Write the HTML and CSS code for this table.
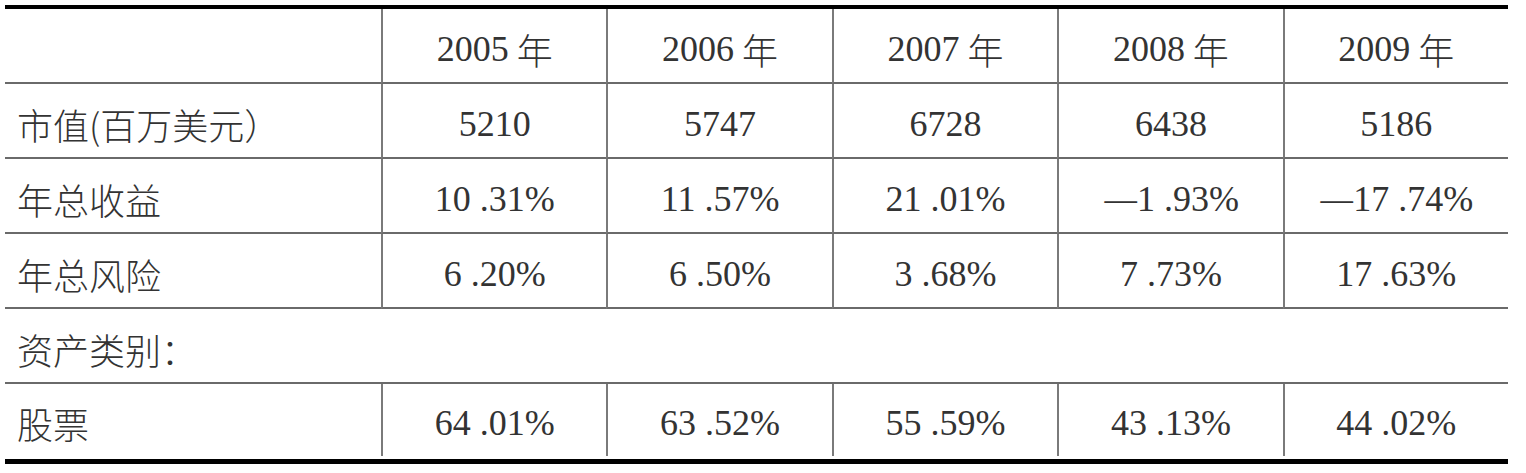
FILE: index.html
```html
<!DOCTYPE html>
<html lang="zh">
<head>
<meta charset="utf-8">
<link rel="stylesheet" href="styles.css">
</head>
<body>
<div class="table">
  <div class="cell label"></div>
  <div class="cell num">2005<span class="cjk"> 年</span></div>
  <div class="cell num">2006<span class="cjk"> 年</span></div>
  <div class="cell num">2007<span class="cjk"> 年</span></div>
  <div class="cell num">2008<span class="cjk"> 年</span></div>
  <div class="cell num">2009<span class="cjk"> 年</span></div>

  <div class="cell label">市值(百万美元）</div>
  <div class="cell num">5210</div>
  <div class="cell num">5747</div>
  <div class="cell num">6728</div>
  <div class="cell num">6438</div>
  <div class="cell num">5186</div>

  <div class="cell label">年总收益</div>
  <div class="cell num">10 .31%</div>
  <div class="cell num">11 .57%</div>
  <div class="cell num">21 .01%</div>
  <div class="cell num"><span class="minus">—</span>1 .93%</div>
  <div class="cell num"><span class="minus">—</span>17 .74%</div>

  <div class="cell label">年总风险</div>
  <div class="cell num">6 .20%</div>
  <div class="cell num">6 .50%</div>
  <div class="cell num">3 .68%</div>
  <div class="cell num">7 .73%</div>
  <div class="cell num">17 .63%</div>

  <div class="cell label span">资产类别：</div>

  <div class="cell label last">股票</div>
  <div class="cell num last">64 .01%</div>
  <div class="cell num last">63 .52%</div>
  <div class="cell num last">55 .59%</div>
  <div class="cell num last">43 .13%</div>
  <div class="cell num last">44 .02%</div>
</div>
</body>
</html>
```

FILE: styles.css
```css
html, body {
  margin: 0;
  padding: 0;
  background: #ffffff;
}

body {
  padding: 5px 0 0 5px;
}

.table {
  display: grid;
  grid-template-columns: 376px repeat(5, 1fr);
  grid-auto-rows: 75px;
  width: 1503px;
  border-top: 4px solid #000000;
  border-bottom: 5px solid #000000;
  color: #333333;
  font-size: 36px;
}

.cell {
  box-sizing: border-box;
  display: flex;
  align-items: center;
  padding-top: 6px;
  border-bottom: 2px solid #6a6a6a;
  line-height: 1;
}

.label {
  padding-left: 12px;
  font-family: "Noto Sans CJK SC", sans-serif;
  font-weight: 300;
}

.num {
  justify-content: center;
  border-left: 2px solid #7a7a7a;
  font-family: "Liberation Serif", serif;
  white-space: pre;
}

.cjk {
  font-family: "Noto Sans CJK SC", sans-serif;
  font-weight: 300;
}

.minus {
  display: inline-block;
  width: 32px;
  margin-right: 2px;
  font-family: "Liberation Serif", serif;
  transform: scaleX(0.9);
}

.span {
  grid-column: 1 / -1;
}

.last {
  border-bottom: none;
  height: 72px;
}
```
